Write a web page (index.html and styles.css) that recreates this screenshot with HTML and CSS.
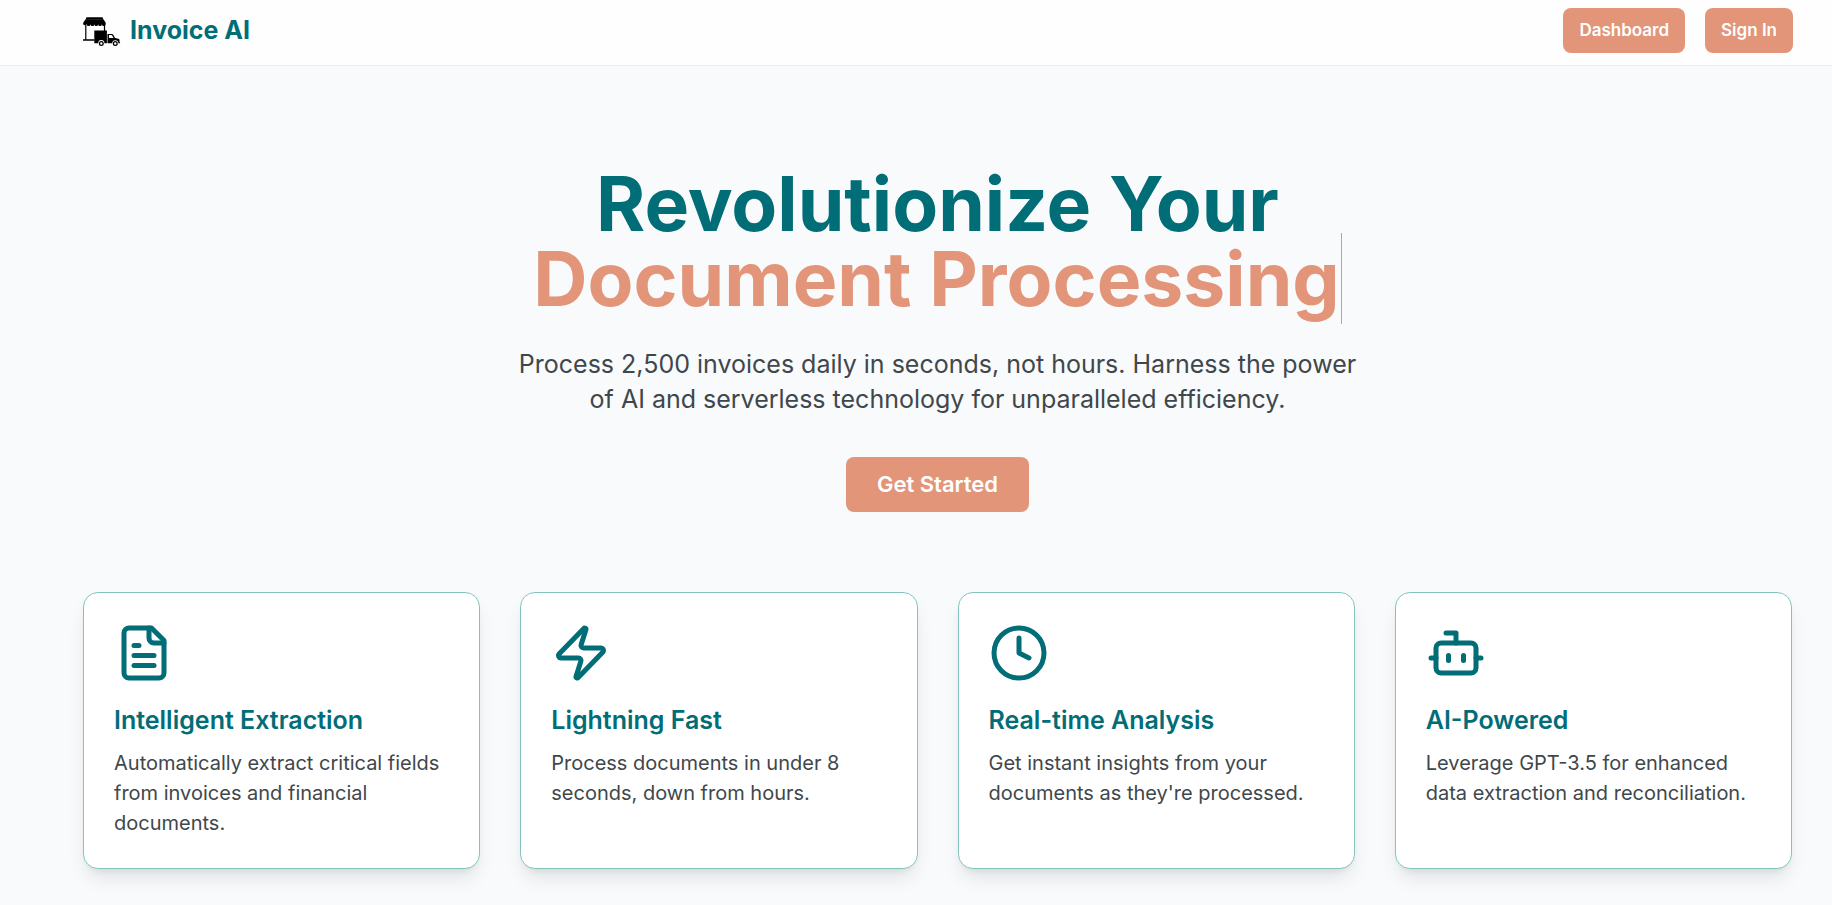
FILE: index.html
```html
<!DOCTYPE html>
<html lang="en">
<head>
<meta charset="utf-8">
<meta name="viewport" content="width=device-width, initial-scale=1">
<title>Invoice AI</title>
<link rel="stylesheet" href="styles.css">
</head>
<body>
<header class="site-header">
  <a class="brand" href="#">
    <svg class="brand-logo" viewBox="0 0 38 30" aria-hidden="true">
      <path d="M3.5 1.3h16l1 2.4H2.5z"/>
      <path d="M2.4 3.6h18.2l2.1 3.2v1.4a1.9 1.9 0 0 1-3.8 0 1.9 1.9 0 0 1-3.8 0 1.9 1.9 0 0 1-3.8 0 1.9 1.9 0 0 1-3.8 0 1.9 1.9 0 0 1-3.8 0A1.9 1.9 0 0 1 .2 8.2V6.8z"/>
      <path d="M2.2 9h1.2v14.3h8v1.5H0v-1.5h2.2zM20.9 9h1.2v6.5h-1.2z"/>
      <path d="M11.3 14.6h12.6v12.6h-2.5a3.1 3.1 0 0 0-6.2 0h-3.9z"/>
      <path fill-rule="evenodd" d="M24.5 18h4.3q1 0 1.6 1l1.7 3 3.4.8q1 .3 1 1.3v2l.6.3v.9h-1.7a3.1 3.1 0 0 0-6.2 0h-4.7zM26 19v3h4.6l-1.5-2.6q-.2-.4-.7-.4z"/>
      <path fill-rule="evenodd" d="M18.3 25a2.5 2.5 0 1 1 0 5 2.5 2.5 0 0 1 0-5zm0 1.3a1.2 1.2 0 1 0 0 2.4 1.2 1.2 0 0 0 0-2.4zM32.3 25a2.5 2.5 0 1 1 0 5 2.5 2.5 0 0 1 0-5zm0 1.3a1.2 1.2 0 1 0 0 2.4 1.2 1.2 0 0 0 0-2.4z"/>
    </svg>
    <span>Invoice AI</span>
  </a>
  <nav class="site-nav">
    <button class="button" type="button">Dashboard</button>
    <button class="button" type="button">Sign In</button>
  </nav>
</header>
<main class="page">
  <section class="hero">
    <h1 class="hero-title">Revolutionize Your<br><span class="hero-typed">Document Processing</span></h1>
    <p class="hero-text">Process 2,500 invoices daily in seconds, not hours. Harness the power of AI and serverless technology for unparalleled efficiency.</p>
    <button class="button button-large" type="button">Get Started</button>
  </section>
  <section class="features">
    <article class="card">
      <svg class="card-icon" viewBox="0 0 24 24" aria-hidden="true"><path d="M15 2H6a2 2 0 0 0-2 2v16a2 2 0 0 0 2 2h12a2 2 0 0 0 2-2V7Z"/><path d="M14 2v4a2 2 0 0 0 2 2h4"/><path d="M10 9H8"/><path d="M16 13H8"/><path d="M16 17H8"/></svg>
      <h3 class="card-title">Intelligent Extraction</h3>
      <p class="card-text">Automatically extract critical fields from invoices and financial documents.</p>
    </article>
    <article class="card">
      <svg class="card-icon" viewBox="0 0 24 24" aria-hidden="true"><path d="M4 14a1 1 0 0 1-.78-1.63l9.9-10.2a.5.5 0 0 1 .86.46l-1.92 6.02A1 1 0 0 0 13 10h7a1 1 0 0 1 .78 1.63l-9.9 10.2a.5.5 0 0 1-.86-.46l1.92-6.02A1 1 0 0 0 11 14z"/></svg>
      <h3 class="card-title">Lightning Fast</h3>
      <p class="card-text">Process documents in under 8 seconds, down from hours.</p>
    </article>
    <article class="card">
      <svg class="card-icon" viewBox="0 0 24 24" aria-hidden="true"><circle cx="12" cy="12" r="10"/><path d="M12 6v6l4 2"/></svg>
      <h3 class="card-title">Real-time Analysis</h3>
      <p class="card-text">Get instant insights from your documents as they're processed.</p>
    </article>
    <article class="card">
      <svg class="card-icon" viewBox="0 0 24 24" aria-hidden="true"><path d="M12 8V4H8"/><rect width="16" height="12" x="4" y="8" rx="2"/><path d="M2 14h2"/><path d="M20 14h2"/><path d="M15 13v2"/><path d="M9 13v2"/></svg>
      <h3 class="card-title">AI-Powered</h3>
      <p class="card-text">Leverage GPT-3.5 for enhanced data extraction and reconciliation.</p>
    </article>
  </section>
</main>
</body>
</html>
```
FILE: styles.css
```css
:root {
  --teal: #006d77;
  --coral: #e29578;
  --mint: #83c5be;
}

* {
  box-sizing: border-box;
}

body {
  margin: 0;
  background: #f8fafc;
  color: #40474b;
  font-family: Inter, "Liberation Sans", sans-serif;
}

.site-header {
  display: flex;
  align-items: center;
  justify-content: space-between;
  padding: 8px 39px 12px 83px;
  background: #fefefe;
  border-bottom: 1px solid #e8edf1;
}

.brand {
  display: flex;
  align-items: center;
  gap: 9px;
  color: var(--teal);
  font-size: 25px;
  font-weight: 700;
  line-height: 35px;
  text-decoration: none;
}

.brand-logo {
  width: 38px;
  height: 30px;
  fill: #000;
}

.site-nav {
  display: flex;
  gap: 20px;
}

.button {
  padding: 10px 16px;
  border: 0;
  border-radius: 8px;
  background: var(--coral);
  color: #fff;
  font-family: inherit;
  font-size: 17px;
  font-weight: 600;
  line-height: 25px;
  cursor: pointer;
}

.button-large {
  padding: 10px 31px;
  font-size: 22px;
  line-height: 35px;
}

.page {
  padding: 100px 40px 36px 83px;
}

.hero {
  display: flex;
  flex-direction: column;
  align-items: center;
  margin-bottom: 80px;
  text-align: center;
}

.hero-title {
  margin: 0 0 31px;
  color: var(--teal);
  font-size: 75px;
  font-weight: 700;
  line-height: 75px;
}

.hero-typed {
  padding-right: 1px;
  border-right: 1px solid var(--coral);
  color: var(--coral);
}

.hero-text {
  max-width: 840px;
  margin: 0 0 40px;
  font-size: 25px;
  line-height: 35px;
}

.features {
  display: grid;
  grid-template-columns: repeat(4, 1fr);
  gap: 40px;
}

.card {
  padding: 30px;
  border: 1px solid var(--mint);
  border-radius: 15px;
  background: #fff;
  box-shadow: 0 12px 19px -4px rgb(0 0 0 / 10%), 0 5px 8px -5px rgb(0 0 0 / 10%);
}

.card-icon {
  display: block;
  width: 60px;
  height: 60px;
  margin-bottom: 20px;
  fill: none;
  stroke: var(--teal);
  stroke-width: 2;
  stroke-linecap: round;
  stroke-linejoin: round;
}

.card-title {
  margin: 0 0 10px;
  color: var(--teal);
  font-size: 25px;
  font-weight: 600;
  line-height: 35px;
}

.card-text {
  margin: 0;
  font-size: 20px;
  line-height: 30px;
}

@media (max-width: 1100px) {
  .features {
    grid-template-columns: repeat(2, 1fr);
  }
}
```
